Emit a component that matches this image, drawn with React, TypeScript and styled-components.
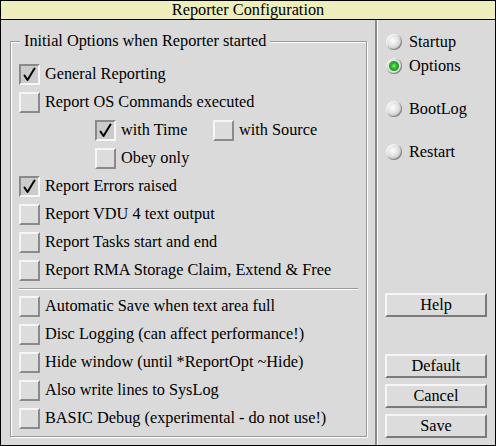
import styled, { createGlobalStyle } from 'styled-components';

const GlobalStyle = createGlobalStyle`
  html, body {
    margin: 0;
    padding: 0;
    background: #dadada;
  }
  * {
    box-sizing: border-box;
  }
`;

const mainOptions = [
  { label: 'General Reporting', checked: true },
  { label: 'Report OS Commands executed', checked: false, sub: true },
  { label: 'Report Errors raised', checked: true },
  { label: 'Report VDU 4 text output', checked: false },
  { label: 'Report Tasks start and end', checked: false },
  { label: 'Report RMA Storage Claim, Extend & Free', checked: false },
];

const extraOptions = [
  'Automatic Save when text area full',
  'Disc Logging (can affect performance!)',
  'Hide window (until *ReportOpt ~Hide)',
  'Also write lines to SysLog',
  'BASIC Debug (experimental - do not use!)',
];

const radios = [
  { label: 'Startup', on: false, spaced: false },
  { label: 'Options', on: true, spaced: false },
  { label: 'BootLog', on: false, spaced: true },
  { label: 'Restart', on: false, spaced: true },
];

function Tick({ checked }: { checked: boolean }) {
  return (
    <Box $checked={checked}>
      {checked && (
        <svg width='15' height='15' viewBox='0 0 15 15'>
          <path
            d='M2.5 8.5 L5.5 13 L12.5 1.5'
            fill='none'
            stroke='#000'
            strokeWidth='2'
            strokeLinecap='round'
            strokeLinejoin='round'
          />
        </svg>
      )}
    </Box>
  );
}

export default function App() {
  return (
    <Window>
      <GlobalStyle />
      <TitleBar>Reporter Configuration</TitleBar>
      <Body>
        <LeftPane>
          <Frame>
            <Legend>Initial Options when Reporter started</Legend>
            {mainOptions.map((o) => (
              <div key={o.label}>
                <Row>
                  <Tick checked={o.checked} />
                  <span>{o.label}</span>
                </Row>
                {o.sub && (
                  <SubGrid>
                    <Row>
                      <Tick checked />
                      <span>with Time</span>
                    </Row>
                    <Row>
                      <Tick checked={false} />
                      <span>with Source</span>
                    </Row>
                    <Row>
                      <Tick checked={false} />
                      <span>Obey only</span>
                    </Row>
                  </SubGrid>
                )}
              </div>
            ))}
            <Separator />
            {extraOptions.map((label) => (
              <Row key={label}>
                <Tick checked={false} />
                <span>{label}</span>
              </Row>
            ))}
          </Frame>
        </LeftPane>
        <RightPane>
          {radios.map((r) => (
            <RadioRow key={r.label} $spaced={r.spaced}>
              <Radio $on={r.on} />
              <span>{r.label}</span>
            </RadioRow>
          ))}
          <Button $top={129}>Help</Button>
          <Button $top={37}>Default</Button>
          <Button $top={6}>Cancel</Button>
          <Button $top={6}>Save</Button>
        </RightPane>
      </Body>
    </Window>
  );
}

const Window = styled.div`
  width: 496px;
  height: 446px;
  border: 1px solid #000;
  background: #dadada;
  display: flex;
  flex-direction: column;
  font-family: 'Liberation Serif', 'Times New Roman', serif;
  font-size: 16.3px;
  color: #000;
`;

const TitleBar = styled.div`
  height: 19px;
  background: #eeeebd;
  border-bottom: 1px solid #000;
  text-align: center;
  line-height: 18px;
`;

const Body = styled.div`
  flex: 1;
  display: flex;
`;

const LeftPane = styled.div`
  width: 374px;
  padding: 12px 8px 8px 9px;
`;

const Frame = styled.fieldset`
  margin: 0;
  padding: 10px 4px 2px 8px;
  border: 1px solid #999;
  box-shadow: 1px 1px 0 #fff, inset 1px 1px 0 #fff;
  height: 100%;
`;

const Legend = styled.legend`
  margin-left: 1px;
  padding: 0 4px;
  line-height: 18px;
  background: #dadada;
`;

const Row = styled.div`
  height: 28px;
  display: flex;
  align-items: center;
  gap: 5px;
  white-space: nowrap;
`;

const SubGrid = styled.div`
  display: grid;
  grid-template-columns: 118px auto;
  padding-left: 76px;
`;

const Box = styled.span<{ $checked: boolean }>`
  width: 21px;
  height: 21px;
  flex: none;
  display: flex;
  align-items: center;
  justify-content: center;
  border: 2px solid;
  border-color: ${(p) =>
    p.$checked ? '#8a8a8a #f6f6f6 #f6f6f6 #8a8a8a' : '#f6f6f6 #8a8a8a #8a8a8a #f6f6f6'};
  background: ${(p) => (p.$checked ? '#cbcbcb' : '#dcdcdc')};
`;

const Separator = styled.div`
  height: 2px;
  margin: 4px 4px 2px 0;
  border-top: 1px solid #999;
  border-bottom: 1px solid #fff;
`;

const RightPane = styled.div`
  flex: 1;
  border-left: 2px solid #8a8a8a;
  box-shadow: inset 1px 0 0 #fff;
  padding: 10px 0 0 8px;
  display: flex;
  flex-direction: column;
`;

const RadioRow = styled.div<{ $spaced: boolean }>`
  height: 24px;
  margin-top: ${(p) => (p.$spaced ? '19px' : '0')};
  display: flex;
  align-items: center;
  gap: 7px;
  padding-left: 1px;
`;

const Radio = styled.span<{ $on: boolean }>`
  width: 16px;
  height: 16px;
  border-radius: 50%;
  flex: none;
  box-shadow: inset -1px -1px 0 #8a8a8a, inset 1px 1px 0 #f4f4f4;
  background: ${(p) =>
    p.$on
      ? 'radial-gradient(circle at 50% 50%, #8ee88e 0, #2fbf2f 2.5px, #1f9a1f 4.5px, #e8e8e8 5.5px, #d2d2d2 6.8px, #9a9a9a 8px)'
      : 'radial-gradient(circle at 42% 40%, #fbfbfb 0, #e8e8e8 4.5px, #d6d6d6 7px, #b4b4b4 9px)'};
`;

const Button = styled.button<{ $top: number }>`
  margin-top: ${(p) => p.$top}px;
  width: 102px;
  height: 24px;
  padding: 0;
  font: inherit;
  color: #000;
  background: #dcdcdc;
  border: 2px solid;
  border-color: #f6f6f6 #7a7a7a #7a7a7a #f6f6f6;
  line-height: 18px;
`;
